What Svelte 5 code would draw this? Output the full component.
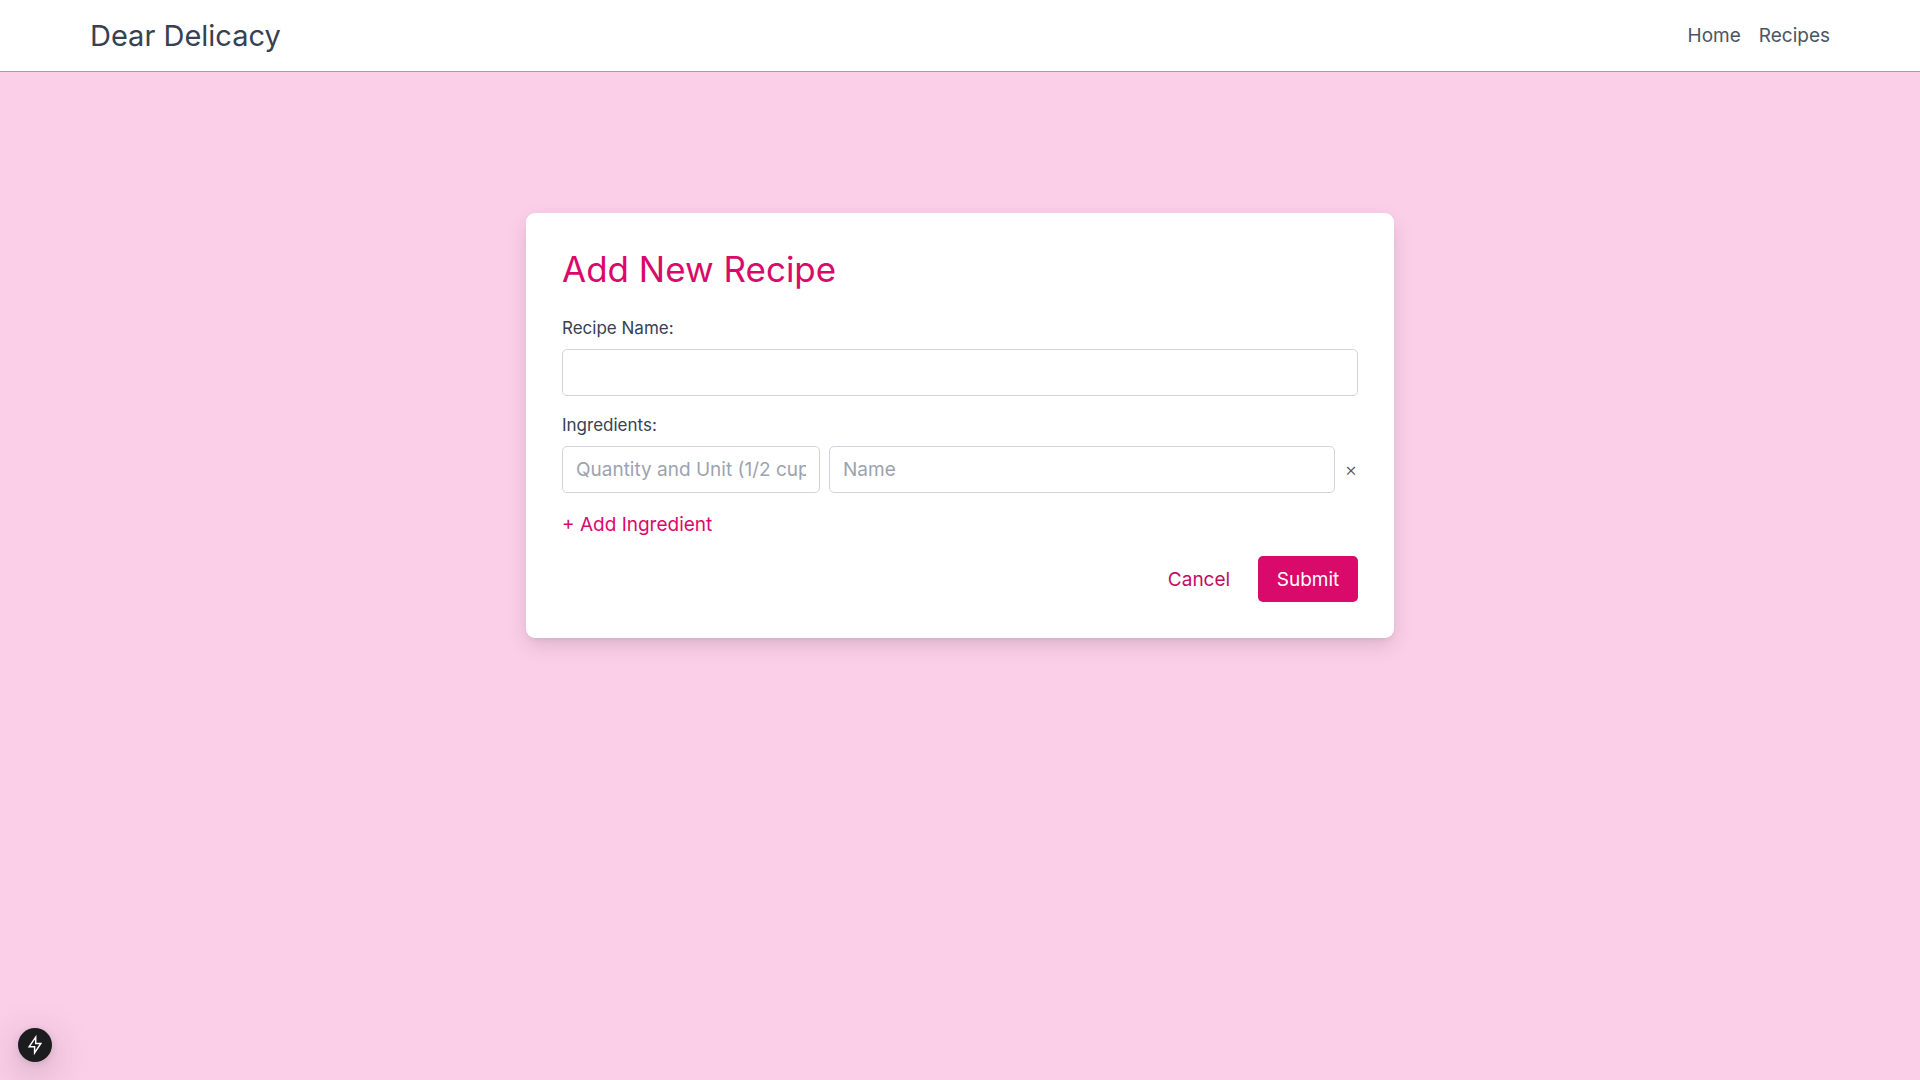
<script>
  let recipeName = $state('');
  let nextId = 1;
  let ingredients = $state([{ id: 0, quantity: '', name: '' }]);

  function addIngredient() {
    ingredients.push({ id: nextId++, quantity: '', name: '' });
  }

  function removeIngredient(id) {
    ingredients = ingredients.filter((item) => item.id !== id);
  }

  function reset() {
    recipeName = '';
    ingredients = [{ id: nextId++, quantity: '', name: '' }];
  }
</script>

<div class="page">
  <header>
    <a class="brand" href="/">Dear Delicacy</a>
    <nav>
      <a href="/">Home</a>
      <a href="/recipes">Recipes</a>
    </nav>
  </header>

  <main>
    <form class="card" onsubmit={(event) => event.preventDefault()}>
      <h1>Add New Recipe</h1>

      <div class="field">
        <label for="recipe-name">Recipe Name:</label>
        <input id="recipe-name" type="text" bind:value={recipeName} />
      </div>

      <fieldset class="field">
        <legend>Ingredients:</legend>
        {#each ingredients as item (item.id)}
          <div class="ingredient">
            <input type="text" aria-label="Quantity and unit" placeholder="Quantity and Unit (1/2 cup)" bind:value={item.quantity} />
            <input type="text" aria-label="Ingredient name" placeholder="Name" bind:value={item.name} />
            <button class="remove" type="button" aria-label="Remove ingredient" onclick={() => removeIngredient(item.id)}>×</button>
          </div>
        {/each}
      </fieldset>

      <button class="add" type="button" onclick={addIngredient}>+ Add Ingredient</button>

      <div class="actions">
        <button class="cancel" type="button" onclick={reset}>Cancel</button>
        <button class="submit" type="submit">Submit</button>
      </div>
    </form>
  </main>

  <button class="indicator" type="button" aria-label="Development tools">
    <svg viewBox="0 0 16 20" width="16" height="20" aria-hidden="true">
      <path d="M8.7 2.2 2.2 11.7H7.6V17.8L13.8 8.5H8.7Z" />
    </svg>
  </button>
</div>

<style>
  :global(body) {
    margin: 0;
    background: #fbcfe8;
  }

  .page {
    min-height: 100vh;
    color: #374151;
    font-family: Inter, 'Open Sans', sans-serif;
    font-size: 19px;
    line-height: 27px;
  }

  header {
    display: flex;
    align-items: center;
    justify-content: space-between;
    padding: 18px 90px;
    border-bottom: 1px solid #9ca3af;
    background: #fff;
  }

  a {
    color: #4b5563;
    text-decoration: none;
  }

  .brand {
    color: #374151;
    font-size: 29px;
    line-height: 35px;
  }

  nav {
    display: flex;
    gap: 18px;
  }

  main {
    padding: 141px 90px 90px;
  }

  .card {
    box-sizing: border-box;
    max-width: 868px;
    margin: 0 auto;
    padding: 36px;
    border-radius: 9px;
    background: #fff;
    box-shadow: 0 8px 20px rgb(0 0 0 / 0.12), 0 4px 6px -4px rgb(0 0 0 / 0.1);
  }

  h1 {
    margin: 0 0 27px;
    color: #d90a6a;
    font-size: 35px;
    font-weight: 400;
    line-height: 41px;
  }

  .field {
    min-width: 0;
    margin: 0 0 18px;
    padding: 0;
    border: 0;
  }

  label,
  legend {
    display: block;
    margin-bottom: 9px;
    padding: 0;
    font-size: 17px;
    line-height: 23px;
  }

  input {
    box-sizing: border-box;
    width: 100%;
    min-width: 0;
    height: 47px;
    padding: 9px 13px;
    border: 1px solid #d1d5db;
    border-radius: 5px;
    background: #fff;
    color: inherit;
    font: inherit;
  }

  input::placeholder {
    color: #9ca3af;
    opacity: 1;
  }

  .ingredient {
    display: grid;
    grid-template-columns: 258px 1fr 14px;
    align-items: center;
    gap: 9px;
  }

  .ingredient + .ingredient {
    margin-top: 9px;
  }

  button {
    padding: 0;
    border: 0;
    background: none;
    color: #d90a6a;
    font: inherit;
    cursor: pointer;
  }

  .remove {
    color: #4b5563;
    font-weight: 300;
  }

  .add {
    display: block;
    margin-bottom: 18px;
  }

  .actions {
    display: flex;
    justify-content: flex-end;
    gap: 9px;
  }

  .cancel,
  .submit {
    min-width: 100px;
    min-height: 46px;
    padding: 9px 18px;
    border-radius: 5px;
  }

  .cancel {
    color: #c20c60;
  }

  .submit {
    background: #d90a6a;
    color: #fff;
  }

  .indicator {
    position: fixed;
    bottom: 18px;
    left: 18px;
    display: flex;
    align-items: center;
    justify-content: center;
    width: 34px;
    height: 34px;
    border-radius: 50%;
    background: #1c1c1e;
    box-shadow: 0 11px 40px rgb(0 0 0 / 0.25), 0 2px 10px rgb(0 0 0 / 0.12);
  }

  .indicator path {
    fill: none;
    stroke: #fff;
    stroke-width: 1.5;
  }
</style>
